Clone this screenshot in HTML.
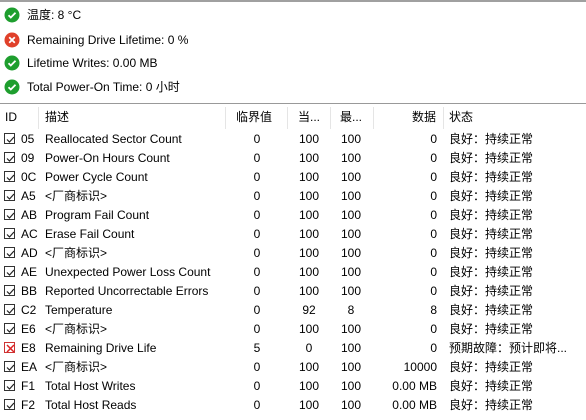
<!DOCTYPE html>
<html><head><meta charset="utf-8"><style>
body{margin:0;width:586px;height:420px;background:#fff;overflow:hidden;font-family:"Liberation Sans","Noto Sans CJK SC",sans-serif;font-size:12px;color:#000;position:relative}
.topl{position:absolute;left:0;top:0;width:586px;height:2px;background:#a0a0a0}
.st{position:absolute;left:4px;height:18px;line-height:18px}
.st svg{position:absolute;left:0;top:1px}
.st span{position:absolute;left:23px;white-space:nowrap}
.sep{position:absolute;left:0;top:103px;width:586px;height:1px;background:#999}
.r{position:absolute;left:0;width:586px;height:19px;line-height:19px;white-space:nowrap}
.r div{position:absolute}
.hd div{color:#000}
.vs{position:absolute;top:107px;width:1px;height:22px;background:#e5e5e5}
.cb{position:absolute;left:4px;top:3px;width:11px;height:11px;border:1px solid #333;box-sizing:border-box}
</style></head><body>
<div class="topl"></div>
<div class="st" style="top:6px"><svg width="16" height="16"><circle cx="8" cy="8" r="7.5" fill="#1e9e2e"/><path d="M4.5 8.2l2.3 2.3 4.7-4.7" stroke="#fff" stroke-width="1.8" fill="none"/></svg><span>温度: 8 °C</span></div>
<div class="st" style="top:31px"><svg width="16" height="16"><circle cx="8" cy="8" r="7.5" fill="#e0402a"/><path d="M5.2 5.2l5.6 5.6M10.8 5.2l-5.6 5.6" stroke="#fff" stroke-width="1.8"/></svg><span>Remaining Drive Lifetime: 0 %</span></div>
<div class="st" style="top:54px"><svg width="16" height="16"><circle cx="8" cy="8" r="7.5" fill="#1e9e2e"/><path d="M4.5 8.2l2.3 2.3 4.7-4.7" stroke="#fff" stroke-width="1.8" fill="none"/></svg><span>Lifetime Writes: 0.00 MB</span></div>
<div class="st" style="top:78px"><svg width="16" height="16"><circle cx="8" cy="8" r="7.5" fill="#1e9e2e"/><path d="M4.5 8.2l2.3 2.3 4.7-4.7" stroke="#fff" stroke-width="1.8" fill="none"/></svg><span>Total Power-On Time: 0 小时</span></div>
<div class="sep"></div>
<div class="vs" style="left:38px"></div><div class="vs" style="left:225px"></div><div class="vs" style="left:287px"></div><div class="vs" style="left:330px"></div><div class="vs" style="left:373px"></div><div class="vs" style="left:443px"></div>
<div class="r hd" style="top:108px"><div style="left:5px">ID</div><div style="left:45px">描述</div><div style="left:236px">临界值</div><div style="left:298px">当...</div><div style="left:340px">最...</div><div style="right:150px">数据</div><div style="left:449px">状态</div></div>
<div id="rows"></div>
<script>
var d=[["05","Reallocated Sector Count","0","100","100","0","良好：持续正常"],
["09","Power-On Hours Count","0","100","100","0","良好：持续正常"],
["0C","Power Cycle Count","0","100","100","0","良好：持续正常"],
["A5","<厂商标识>","0","100","100","0","良好：持续正常"],
["AB","Program Fail Count","0","100","100","0","良好：持续正常"],
["AC","Erase Fail Count","0","100","100","0","良好：持续正常"],
["AD","<厂商标识>","0","100","100","0","良好：持续正常"],
["AE","Unexpected Power Loss Count","0","100","100","0","良好：持续正常"],
["BB","Reported Uncorrectable Errors","0","100","100","0","良好：持续正常"],
["C2","Temperature","0","92","8","8","良好：持续正常"],
["E6","<厂商标识>","0","100","100","0","良好：持续正常"],
["E8","Remaining Drive Life","5","0","100","0","预期故障：预计即将..."],
["EA","<厂商标识>","0","100","100","10000","良好：持续正常"],
["F1","Total Host Writes","0","100","100","0.00 MB","良好：持续正常"],
["F2","Total Host Reads","0","100","100","0.00 MB","良好：持续正常"]];
var h="";
d.forEach(function(r,i){var t=130+i*19;var bad=r[0]=="E8";
var cb=bad?'<svg class="cb" style="border-color:#c33" width="11" height="11"><path d="M2 2l7 7M9 2l-7 7" stroke="#d22" stroke-width="1.5"/></svg>':'<svg class="cb" width="11" height="11"><path d="M2 5.5l2.5 2.5 4.5-5" stroke="#222" stroke-width="1.2" fill="none"/></svg>';
var e=function(s){return s.replace(/</g,"&lt;").replace(/>/g,"&gt;")};
h+='<div class="r" style="top:'+t+'px">'+cb+'<div style="left:21px">'+r[0]+'</div><div style="left:45px">'+e(r[1])+'</div><div style="left:227px;width:60px;text-align:center">'+r[2]+'</div><div style="left:289px;width:40px;text-align:center">'+r[3]+'</div><div style="left:331px;width:40px;text-align:center">'+r[4]+'</div><div style="right:149px">'+r[5]+'</div><div style="left:449px">'+r[6]+'</div></div>';});
document.getElementById("rows").innerHTML=h;
</script>
</body></html>
